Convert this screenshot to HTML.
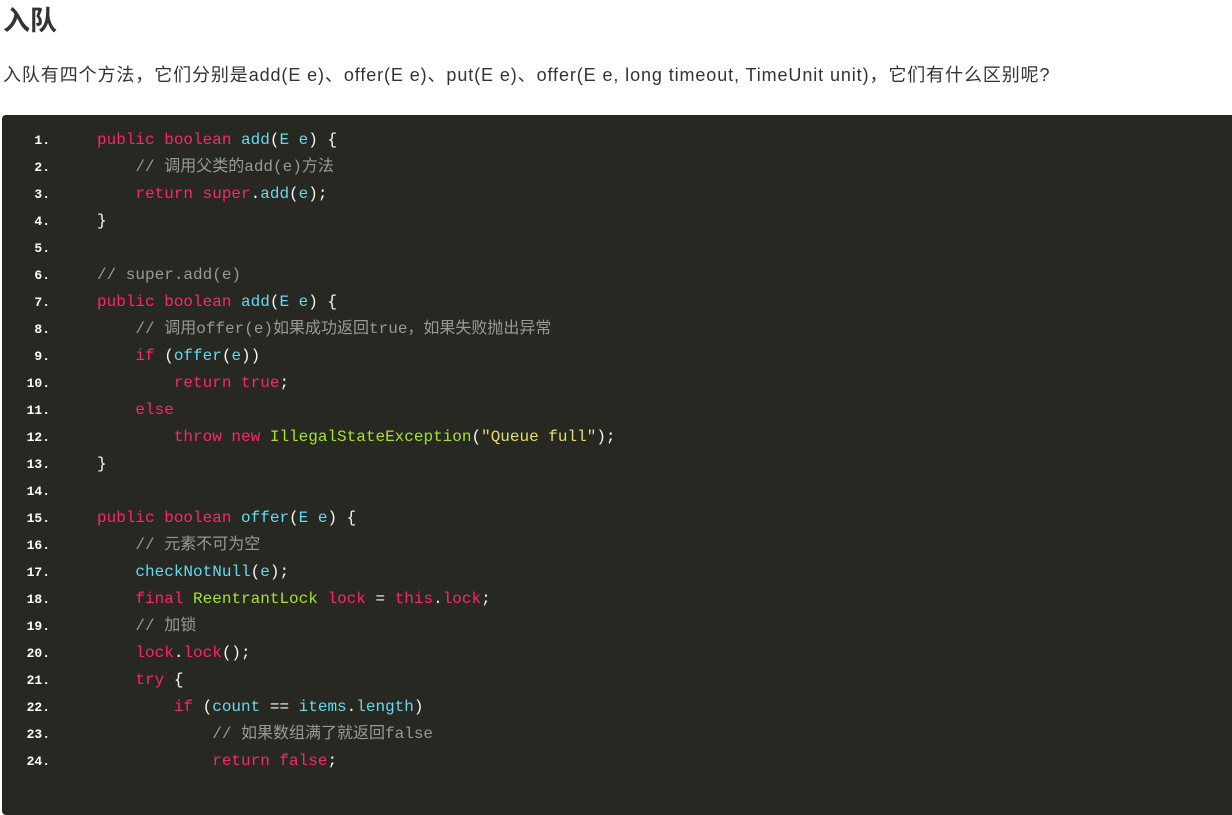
<!DOCTYPE html>
<html><head><meta charset="utf-8"><style>
body{margin:0;background:#fff;width:1232px;height:773px;overflow:hidden;font-family:"Liberation Sans","Noto Sans CJK SC",sans-serif;color:#333}
h2{margin:0;position:absolute;left:3px;top:4px;font-size:27px;line-height:34px;font-weight:bold;color:#333}
p{margin:0;position:absolute;left:3px;top:62px;font-size:18px;letter-spacing:0.9px;line-height:26px;color:#333;white-space:nowrap}
.code{position:absolute;left:2px;top:115px;width:1240px;height:700px;background:#272822;border-radius:4px}
.l{position:absolute;left:0;height:27px;line-height:27px;font-family:"Liberation Mono","Noto Sans CJK SC",monospace;font-size:16px;color:#f8f8f2;white-space:pre}
.n{position:absolute;left:0;width:48px;text-align:right;font-size:13px;font-weight:bold;color:#fff}
.c{position:absolute;left:95px}
.k{color:#f92672}.f{color:#66d9ef}.t{color:#a6e22e}.s{color:#e6db74}.m{color:#999}
</style></head><body>
<h2>入队</h2>
<p>入队有四个方法，它们分别是add(E e)、offer(E e)、put(E e)、offer(E e, long timeout, TimeUnit unit)，它们有什么区别呢?</p>
<div class="code">
<div class="l" style="top:12px"><span class="n">1.</span><span class="c"><span class="k">public boolean</span> <span class="f">add</span>(<span class="f">E e</span>) {</span></div>
<div class="l" style="top:39px"><span class="n">2.</span><span class="c">    <span class="m">// 调用父类的add(e)方法</span></span></div>
<div class="l" style="top:66px"><span class="n">3.</span><span class="c">    <span class="k">return super</span>.<span class="f">add</span>(<span class="f">e</span>);</span></div>
<div class="l" style="top:93px"><span class="n">4.</span><span class="c">}</span></div>
<div class="l" style="top:120px"><span class="n">5.</span><span class="c"></span></div>
<div class="l" style="top:147px"><span class="n">6.</span><span class="c"><span class="m">// super.add(e)</span></span></div>
<div class="l" style="top:174px"><span class="n">7.</span><span class="c"><span class="k">public boolean</span> <span class="f">add</span>(<span class="f">E e</span>) {</span></div>
<div class="l" style="top:201px"><span class="n">8.</span><span class="c">    <span class="m">// 调用offer(e)如果成功返回true，如果失败抛出异常</span></span></div>
<div class="l" style="top:228px"><span class="n">9.</span><span class="c">    <span class="k">if</span> (<span class="f">offer</span>(<span class="f">e</span>))</span></div>
<div class="l" style="top:255px"><span class="n">10.</span><span class="c">        <span class="k">return true</span>;</span></div>
<div class="l" style="top:282px"><span class="n">11.</span><span class="c">    <span class="k">else</span></span></div>
<div class="l" style="top:309px"><span class="n">12.</span><span class="c">        <span class="k">throw new</span> <span class="t">IllegalStateException</span>(<span class="s">"Queue full"</span>);</span></div>
<div class="l" style="top:336px"><span class="n">13.</span><span class="c">}</span></div>
<div class="l" style="top:363px"><span class="n">14.</span><span class="c"></span></div>
<div class="l" style="top:390px"><span class="n">15.</span><span class="c"><span class="k">public boolean</span> <span class="f">offer</span>(<span class="f">E e</span>) {</span></div>
<div class="l" style="top:417px"><span class="n">16.</span><span class="c">    <span class="m">// 元素不可为空</span></span></div>
<div class="l" style="top:444px"><span class="n">17.</span><span class="c">    <span class="f">checkNotNull</span>(<span class="f">e</span>);</span></div>
<div class="l" style="top:471px"><span class="n">18.</span><span class="c">    <span class="k">final</span> <span class="t">ReentrantLock</span> <span class="k">lock</span> = <span class="k">this</span>.<span class="k">lock</span>;</span></div>
<div class="l" style="top:498px"><span class="n">19.</span><span class="c">    <span class="m">// 加锁</span></span></div>
<div class="l" style="top:525px"><span class="n">20.</span><span class="c">    <span class="k">lock</span>.<span class="k">lock</span>();</span></div>
<div class="l" style="top:552px"><span class="n">21.</span><span class="c">    <span class="k">try</span> {</span></div>
<div class="l" style="top:579px"><span class="n">22.</span><span class="c">        <span class="k">if</span> (<span class="f">count</span> == <span class="f">items</span>.<span class="f">length</span>)</span></div>
<div class="l" style="top:606px"><span class="n">23.</span><span class="c">            <span class="m">// 如果数组满了就返回false</span></span></div>
<div class="l" style="top:633px"><span class="n">24.</span><span class="c">            <span class="k">return false</span>;</span></div>
</div>
</body></html>
